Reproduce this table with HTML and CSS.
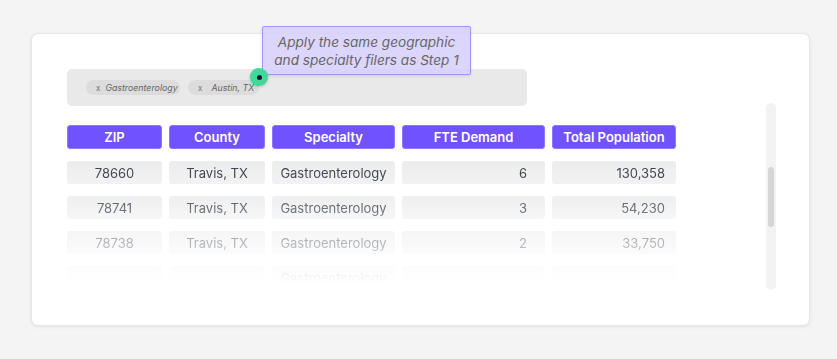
FILE: index.html
```html
<!DOCTYPE html>
<html>
<head>
<meta charset="utf-8">
<link rel="stylesheet" href="styles.css">
</head>
<body>
<div class="stage">
  <div class="card">
    <div class="main">
      <div class="filters">
        <span class="chip"><span class="chip-x">x</span><span class="chip-label">Gastroenterology</span></span>
        <span class="chip chip-wide"><span class="chip-x">x</span><span class="chip-label">Austin, TX</span></span>
      </div>
      <div class="table">
        <div class="row head">
          <div class="th c-zip">ZIP</div>
          <div class="th c-county">County</div>
          <div class="th c-spec">Specialty</div>
          <div class="th c-fte">FTE Demand</div>
          <div class="th c-pop">Total Population</div>
        </div>
        <div class="body">
          <div class="row">
            <div class="td c-zip">78660</div>
            <div class="td c-county">Travis, TX</div>
            <div class="td c-spec">Gastroenterology</div>
            <div class="td c-fte num">6</div>
            <div class="td c-pop num">130,358</div>
          </div>
          <div class="row">
            <div class="td c-zip">78741</div>
            <div class="td c-county">Travis, TX</div>
            <div class="td c-spec">Gastroenterology</div>
            <div class="td c-fte num">3</div>
            <div class="td c-pop num">54,230</div>
          </div>
          <div class="row">
            <div class="td c-zip">78738</div>
            <div class="td c-county">Travis, TX</div>
            <div class="td c-spec">Gastroenterology</div>
            <div class="td c-fte num">2</div>
            <div class="td c-pop num">33,750</div>
          </div>
          <div class="row row-last">
            <div class="td c-zip">&nbsp;</div>
            <div class="td c-county">&nbsp;</div>
            <div class="td c-spec">Gastroenterology</div>
            <div class="td c-fte num">&nbsp;</div>
            <div class="td c-pop num">&nbsp;</div>
          </div>
        </div>
      </div>
    </div>
    <div class="scroll-track"><div class="scroll-thumb"></div></div>
  </div>
  <div class="tooltip">Apply the same geographic<br>and specialty filers as Step 1</div>
  <div class="hotspot"><span class="hotspot-core"></span></div>
</div>
</body>
</html>
```
FILE: styles.css
```css
* { box-sizing: border-box; }
html, body { margin: 0; padding: 0; }
body {
  background: #f4f4f4;
  font-family: "Inter", "DejaVu Sans", sans-serif;
  color: #373d48;
  width: 837px;
  height: 359px;
  overflow: hidden;
}
.stage {
  position: relative;
  width: 837px;
  height: 359px;
  padding: 34px 0 0 32px;
}
.card {
  width: 777px;
  height: 291px;
  background: #fff;
  border-radius: 6px;
  box-shadow: 0 0 0 1px #e6e6e6, 0 1px 4px rgba(0,0,0,0.12);
  display: flex;
  padding: 35px 33px 0 35px;
}
.main { flex: 1; }
.filters {
  width: 460px;
  height: 37px;
  background: #e9e9e9;
  border-radius: 5px;
  display: flex;
  align-items: center;
  gap: 8px;
  padding: 0 0 0 19px;
}
.chip {
  height: 15px;
  border-radius: 8px;
  background: #dcdcdc;
  display: inline-flex;
  align-items: center;
  padding: 0 7px 0 10px;
  font-size: 8.8px;
  color: #666;
  width: 94px;
}
.chip-wide { width: 71px; padding-left: 10px; }
.chip-x { font-size: 8px; margin-right: 5px; color: #777; }
.chip-wide .chip-x { margin-right: 9px; }
.chip-label { font-style: italic; white-space: nowrap; }
.table { margin-top: 19px; }
.row { display: flex; gap: 7px; }
.head { height: 24px; }
.th {
  background: #7152ff;
  color: #fff;
  font-weight: 600;
  font-size: 13px;
  border-radius: 3px;
  border: 1px solid #8f77ff;
  display: flex;
  align-items: center;
  justify-content: center;
}
.c-zip { width: 95px; }
.c-county { width: 96px; }
.c-spec { width: 123px; }
.c-fte { width: 143px; }
.c-pop { width: 124px; }
.body {
  margin-top: 12px;
  height: 122px;
  overflow: hidden;
  display: flex;
  flex-direction: column;
  gap: 12px;
  -webkit-mask-image: linear-gradient(to bottom, #000 0%, rgba(0,0,0,0.85) 30%, rgba(0,0,0,0.35) 70%, transparent 100%);
  mask-image: linear-gradient(to bottom, #000 0%, rgba(0,0,0,0.85) 30%, rgba(0,0,0,0.35) 70%, transparent 100%);
}
.body .row { height: 23px; flex: none; }
.body .row-last { height: 17px; overflow: hidden; align-items: flex-start; }
.row-last .td { height: 23px; }
.td {
  background: linear-gradient(to bottom, #ececec, #f1f1f1);
  border-radius: 3px;
  font-size: 13px;
  display: flex;
  align-items: center;
  justify-content: center;
  white-space: nowrap;
  color: #3a404b;
}
.num { justify-content: flex-end; }
.c-fte.num { padding-right: 18px; }
.c-pop.num { padding-right: 11px; }
.scroll-track {
  width: 10px;
  height: 187px;
  margin-top: 34px;
  background: #f3f3f3;
  border-radius: 5px;
  display: flex;
  justify-content: center;
  padding-top: 64px;
}
.scroll-thumb {
  width: 6px;
  height: 60px;
  background: #d6d6d6;
  border-radius: 3px;
}
.tooltip {
  position: absolute;
  left: 262px;
  top: 26px;
  width: 209px;
  height: 49px;
  background: rgba(214, 206, 252, 0.85);
  border: 1px solid #a596f3;
  border-radius: 2px;
  box-shadow: 0 1px 3px rgba(0,0,0,0.12);
  color: #666;
  font-style: italic;
  font-size: 13.6px;
  line-height: 18px;
  text-align: center;
  padding-top: 6px;
}
.hotspot {
  position: absolute;
  left: 250px;
  top: 68px;
  width: 18px;
  height: 18px;
  border-radius: 50%;
  background: #41d89a;
  box-shadow: 0 1px 3px rgba(0,0,0,0.2);
  display: flex;
  align-items: center;
  justify-content: center;
}
.hotspot-core {
  width: 5px;
  height: 5px;
  border-radius: 50%;
  background: #151a33;
}
```
